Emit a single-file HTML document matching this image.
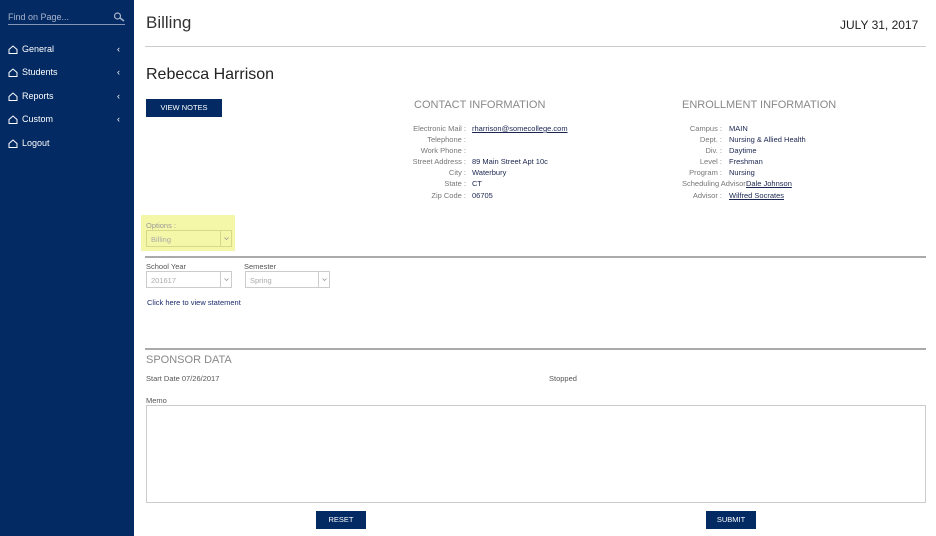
<!DOCTYPE html>
<html><head><meta charset="utf-8"><style>
*{margin:0;padding:0;box-sizing:border-box}
body{width:936px;height:536px;position:relative;font-family:"Liberation Sans",Arial,sans-serif;background:#fff;overflow:hidden;color:#333}
.a{position:absolute;white-space:nowrap}
#sb{position:absolute;left:0;top:0;width:134px;height:536px;background:#032a63}
.nav{position:absolute;left:8px;color:#fff;font-size:9px}
.nav svg{vertical-align:-2px;margin-right:4px}
.chev{position:absolute;left:117px;color:#fff;font-size:9px}
.btn{position:absolute;background:#032a63;color:#fff;font-size:7.5px;text-align:center}
.lab{position:absolute;font-size:7.5px;color:#777;text-align:right;white-space:nowrap}
.val{position:absolute;font-size:7.5px;color:#1a2550;white-space:nowrap}
.u{text-decoration:underline}
.sel{position:absolute;border:1px solid #ccc;height:17px;font-size:7.5px;color:#aaa;padding:4px 0 0 4px;background:#fff}
.sel i{position:absolute;right:0;top:0;width:11px;height:15px;border-left:1px solid #ccc}
.sel i svg{position:absolute;left:3px;top:6px}
.sl{position:absolute;font-size:7.5px;color:#555}
.hr{position:absolute;left:145px;width:781px;height:2px;background:#aaa}
</style></head><body>
<div id="sb">
<div class="a" style="left:8px;top:12px;font-size:9px;color:#aab4cc">Find on Page...</div>
<svg class="a" style="left:113px;top:12px" width="12" height="10" viewBox="0 0 12 10"><circle cx="4.5" cy="4" r="3" fill="none" stroke="#aab4cc" stroke-width="1.2"/><line x1="7" y1="6" x2="11" y2="9" stroke="#aab4cc" stroke-width="1.5"/></svg>
<div class="a" style="left:8px;top:24px;width:117px;height:1px;background:#8894b5"></div>
<div class="nav" style="top:44px"><svg width="10" height="9" viewBox="0 0 10 9"><path d="M1 4.5L5 1l4 3.5V8.5H1z" fill="none" stroke="#fff" stroke-width="1"/></svg>General</div><div class="chev" style="top:44px">‹</div>
<div class="nav" style="top:67px"><svg width="10" height="9" viewBox="0 0 10 9"><path d="M1 4.5L5 1l4 3.5V8.5H1z" fill="none" stroke="#fff" stroke-width="1"/></svg>Students</div><div class="chev" style="top:67px">‹</div>
<div class="nav" style="top:91px"><svg width="10" height="9" viewBox="0 0 10 9"><path d="M1 4.5L5 1l4 3.5V8.5H1z" fill="none" stroke="#fff" stroke-width="1"/></svg>Reports</div><div class="chev" style="top:91px">‹</div>
<div class="nav" style="top:114px"><svg width="10" height="9" viewBox="0 0 10 9"><path d="M1 4.5L5 1l4 3.5V8.5H1z" fill="none" stroke="#fff" stroke-width="1"/></svg>Custom</div><div class="chev" style="top:114px">‹</div>
<div class="nav" style="top:138px"><svg width="10" height="9" viewBox="0 0 10 9"><path d="M1 4.5L5 1l4 3.5V8.5H1z" fill="none" stroke="#fff" stroke-width="1"/></svg>Logout</div>
</div>
<div class="a" style="left:146px;top:13px;font-size:17px;color:#333">Billing</div>
<div class="a" style="left:840px;top:18px;font-size:12px;color:#222">JULY 31, 2017</div>
<div class="a" style="left:145px;top:46px;width:781px;height:1px;background:#ccc"></div>
<div class="a" style="left:146px;top:66px;font-size:16px;color:#222">Rebecca Harrison</div>
<div class="btn" style="left:146px;top:99px;width:76px;height:18px;line-height:18px">VIEW NOTES</div>
<div class="a" style="left:414px;top:99px;font-size:11px;color:#888">CONTACT INFORMATION</div>
<div class="a" style="left:682px;top:99px;font-size:11px;color:#888">ENROLLMENT INFORMATION</div>
<div class="lab" style="left:380px;width:86px;top:123px;line-height:11.1px">Electronic Mail :<br>Telephone :<br>Work Phone :<br>Street Address :<br>City :<br>State :<br>Zip Code :</div>
<div class="val" style="left:472px;top:123px;line-height:11.1px"><span class="u">rharrison@somecollege.com</span><br><br><br>89 Main Street Apt 10c<br>Waterbury<br>CT<br>06705</div>
<div class="lab" style="left:640px;width:82px;top:123px;line-height:11.1px">Campus :<br>Dept. :<br>Div. :<br>Level :<br>Program :<br>&nbsp;<br>Advisor :</div>
<div class="lab" style="left:682px;top:178.5px;text-align:left">Scheduling Advisor:</div>
<div class="val" style="left:729px;top:123px;line-height:11.1px">MAIN<br>Nursing &amp; Allied Health<br>Daytime<br>Freshman<br>Nursing<br><br><span class="u">Wilfred Socrates</span></div>
<div class="val u" style="left:746px;top:178.5px">Dale Johnson</div>
<div class="a" style="left:141px;top:215px;width:94px;height:36px;background:#f5f7a8"></div>
<div class="sl" style="left:146px;top:221px;color:#999">Options :</div>
<div class="sel" style="left:146px;top:230px;width:86px;background:#f5f7a8;border-color:#d6d88a"><span>Billing</span><i style="border-color:#d6d88a"><svg width="5" height="3" viewBox="0 0 5 3"><path d="M0.5 0.5L2.5 2.5L4.5 0.5" fill="none" stroke="#999" stroke-width="0.8"/></svg></i></div>
<div class="hr" style="top:256px"></div>
<div class="sl" style="left:146px;top:262px">School Year</div>
<div class="sl" style="left:244px;top:262px">Semester</div>
<div class="sel" style="left:146px;top:271px;width:86px">201617<i><svg width="5" height="3" viewBox="0 0 5 3"><path d="M0.5 0.5L2.5 2.5L4.5 0.5" fill="none" stroke="#999" stroke-width="0.8"/></svg></i></div>
<div class="sel" style="left:245px;top:271px;width:85px">Spring<i><svg width="5" height="3" viewBox="0 0 5 3"><path d="M0.5 0.5L2.5 2.5L4.5 0.5" fill="none" stroke="#999" stroke-width="0.8"/></svg></i></div>
<div class="a" style="left:147px;top:298px;font-size:7.5px;color:#1a2a6c">Click here to view statement</div>
<div class="hr" style="top:348px"></div>
<div class="a" style="left:146px;top:354px;font-size:11px;color:#888">SPONSOR DATA</div>
<div class="sl" style="left:146px;top:374px">Start Date 07/26/2017</div>
<div class="sl" style="left:549px;top:374px">Stopped</div>
<div class="sl" style="left:146px;top:396px">Memo</div>
<div class="a" style="left:146px;top:405px;width:780px;height:98px;border:1px solid #ccc"></div>
<div class="btn" style="left:316px;top:511px;width:50px;height:18px;line-height:18px">RESET</div>
<div class="btn" style="left:706px;top:511px;width:50px;height:18px;line-height:18px">SUBMIT</div>
</body></html>
